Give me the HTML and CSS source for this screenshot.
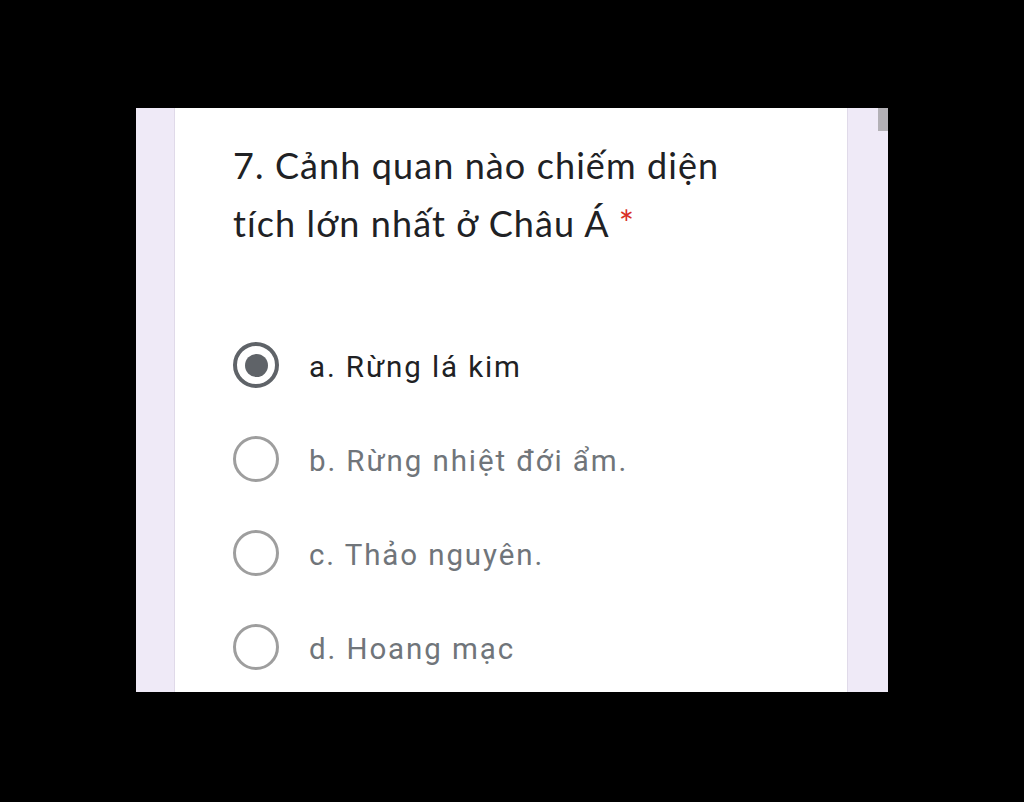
FILE: index.html
```html
<!DOCTYPE html>
<html>
<head>
<meta charset="utf-8">
<link rel="stylesheet" href="styles.css">
</head>
<body>
<div class="panel">
  <div class="side side-left"></div>
  <div class="card">
    <div class="question">7. Cảnh quan nào chiếm diện tích lớn nhất ở Châu Á <span class="req">*</span></div>
    <div class="options">
      <div class="option selected"><span class="radio"><span class="dot"></span></span><span class="label">a. Rừng lá kim</span></div>
      <div class="option"><span class="radio"></span><span class="label">b. Rừng nhiệt đới ẩm.</span></div>
      <div class="option"><span class="radio"></span><span class="label">c. Thảo nguyên.</span></div>
      <div class="option"><span class="radio"></span><span class="label">d. Hoang mạc</span></div>
    </div>
  </div>
  <div class="side side-right"><div class="thumb"></div></div>
</div>
</body>
</html>
```
FILE: styles.css
```css
html, body {
  margin: 0;
  padding: 0;
  background: #000;
  width: 1024px;
  height: 802px;
  overflow: hidden;
}
.panel {
  margin: 108px 0 0 136px;
  width: 752px;
  height: 584px;
  display: flex;
  background: #efeaf7;
  overflow: hidden;
}
.side-left {
  width: 38px;
  border-right: 1px solid #e0dae9;
}
.card {
  width: 673px;
  background: #fff;
  padding: 28px 0 0 58px;
  box-sizing: border-box;
  border-right: 1px solid #e0dae9;
}
.side-right {
  flex: 1;
  display: flex;
  justify-content: flex-end;
}
.thumb {
  width: 10px;
  height: 23px;
  background: #b3b1b6;
}
.question {
  font-family: "Lato", "Open Sans", sans-serif;
  font-size: 36px;
  line-height: 58px;
  letter-spacing: 1.1px;
  color: #202124;
  width: 500px;
}
.req {
  color: #d93025;
}
.options {
  margin-top: 90px;
  display: flex;
  flex-direction: column;
  gap: 48px;
}
.option {
  display: flex;
  align-items: center;
  height: 46px;
}
.radio {
  width: 46px;
  height: 46px;
  box-sizing: border-box;
  border: 3.5px solid #9e9e9e;
  border-radius: 50%;
  display: flex;
  align-items: center;
  justify-content: center;
  flex: none;
}
.selected .radio {
  border: 4px solid #5f6368;
}
.dot {
  width: 23px;
  height: 23px;
  border-radius: 50%;
  background: #5f6368;
}
.label {
  font-family: "Roboto", sans-serif;
  font-size: 29.5px;
  letter-spacing: 1.9px;
  color: #70757a;
  margin-left: 30px;
  padding-top: 4px;
}
.selected .label {
  color: #202124;
}
```
